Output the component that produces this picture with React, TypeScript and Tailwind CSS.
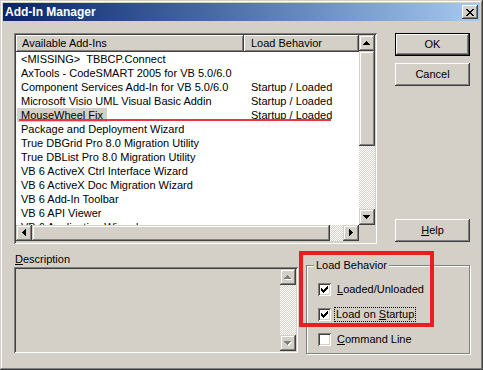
import React from 'react';

// --- classic Win2000 bevels ---
const raised =
  'shadow-[inset_-1px_-1px_0_#404040,inset_1px_1px_0_#ffffff,inset_-2px_-2px_0_#808080,inset_2px_2px_0_#d4d0c8]';
const scrollBtn =
  'shadow-[inset_-1px_-1px_0_#404040,inset_1px_1px_0_#d4d0c8,inset_-2px_-2px_0_#808080,inset_2px_2px_0_#ffffff]';
const sunken =
  'shadow-[inset_1px_1px_0_#808080,inset_-1px_-1px_0_#ffffff,inset_2px_2px_0_#404040,inset_-2px_-2px_0_#d4d0c8]';
const checker = 'bg-[image:repeating-conic-gradient(#ffffff_0%_25%,#d4d0c8_0%_50%)] bg-[length:2px_2px]';

const arrows: Record<string, { w: number; h: number; d: string }> = {
  up: { w: 7, h: 4, d: 'M3 0h1v1h-1z M2 1h3v1h-3z M1 2h5v1h-5z M0 3h7v1h-7z' },
  down: { w: 7, h: 4, d: 'M0 0h7v1h-7z M1 1h5v1h-5z M2 2h3v1h-3z M3 3h1v1h-1z' },
  left: { w: 4, h: 7, d: 'M3 0h1v7h-1z M2 1h1v5h-1z M1 2h1v3h-1z M0 3h1v1h-1z' },
  right: { w: 4, h: 7, d: 'M0 0h1v7h-1z M1 1h1v5h-1z M2 2h1v3h-1z M3 3h1v1h-1z' },
};

const Arrow: React.FC<{ dir: string; disabled?: boolean }> = ({ dir, disabled }) => {
  const a = arrows[dir];
  return (
    <div className={`w-[16px] h-[16px] shrink-0 bg-[#d4d0c8] flex items-center justify-center ${scrollBtn}`}>
      <svg width={a.w + 1} height={a.h + 1} viewBox={`0 0 ${a.w + 1} ${a.h + 1}`} shapeRendering="crispEdges">
        {disabled && <path d={a.d} fill="#ffffff" transform="translate(1 1)" />}
        <path d={a.d} fill={disabled ? '#808080' : '#000000'} />
      </svg>
    </div>
  );
};

const Check: React.FC<{ checked: boolean }> = ({ checked }) => (
  <div className={`w-[13px] h-[13px] shrink-0 bg-white flex items-center justify-center ${sunken}`}>
    {checked && (
      <svg width="7" height="7" viewBox="0 0 7 7" shapeRendering="crispEdges">
        <path
          d="M6 0h1v1h-1z M5 1h2v1h-2z M0 2h1v1h-1z M4 2h3v1h-3z M0 3h2v1h-2z M3 3h3v1h-3z M0 4h5v1h-5z M1 5h3v1h-3z M2 6h1v1h-1z"
          fill="#000"
        />
      </svg>
    )}
  </div>
);

const rows: [string, string][] = [
  ['<MISSING>  TBBCP.Connect', ''],
  ['AxTools - CodeSMART 2005 for VB 5.0/6.0', ''],
  ['Component Services Add-In for VB 5.0/6.0', 'Startup / Loaded'],
  ['Microsoft Visio UML Visual Basic Addin', 'Startup / Loaded'],
  ['MouseWheel Fix', 'Startup / Loaded'],
  ['Package and Deployment Wizard', ''],
  ['True DBGrid Pro 8.0 Migration Utility', ''],
  ['True DBList Pro 8.0 Migration Utility', ''],
  ['VB 6 ActiveX Ctrl Interface Wizard', ''],
  ['VB 6 ActiveX Doc Migration Wizard', ''],
  ['VB 6 Add-In Toolbar', ''],
  ['VB 6 API Viewer', ''],
  ['VB 6 Application Wizard', ''],
];

const Button: React.FC<{ children: React.ReactNode; def?: boolean; className?: string }> = ({ children, def, className }) => (
  <div
    className={`w-[75px] h-[23px] bg-[#d4d0c8] flex items-center justify-center ${def ? 'border border-black' : ''} ${raised} ${className ?? ''}`}
  >
    {children}
  </div>
);

export default function App() {
  return (
    <div className="relative w-[483px] h-[370px] bg-[#d4d0c8] text-black text-[11px] leading-[13px] font-['Liberation_Sans',Arial,sans-serif] shadow-[inset_-1px_-1px_0_#404040,inset_1px_1px_0_#d4d0c8,inset_-2px_-2px_0_#808080,inset_2px_2px_0_#ffffff] p-[3px] flex flex-col overflow-hidden">
      {/* title bar */}
      <div className="h-[18px] shrink-0 bg-linear-to-r from-[#0a246a] to-[#a6caf0] flex items-center justify-between pl-[2px] pr-[2px]">
        <span className="text-white font-bold text-[12px] leading-[14px]">Add-In Manager</span>
        <div className={`w-[16px] h-[14px] bg-[#d4d0c8] flex items-center justify-center ${raised}`}>
          <svg width="8" height="7" viewBox="0 0 8 7" shapeRendering="crispEdges">
            <path
              d="M0 0h2v1h-2z M6 0h2v1h-2z M1 1h2v1h-2z M5 1h2v1h-2z M2 2h4v1h-4z M3 3h2v1h-2z M2 4h4v1h-4z M1 5h2v1h-2z M5 5h2v1h-2z M0 6h2v1h-2z M6 6h2v1h-2z"
              fill="#000"
            />
          </svg>
        </div>
      </div>

      <div className="flex flex-col pl-[11px] pt-[12px]">
        {/* list + buttons */}
        <div className="flex">
          <div className={`w-[363px] h-[211px] p-[2px] ${sunken}`}>
            <div className="flex flex-col w-full h-full">
              <div className="flex h-[190px]">
                <div className="w-[343px] bg-white flex flex-col">
                  <div className="flex h-[17px] shrink-0">
                    <div className={`w-[228px] bg-[#d4d0c8] pl-[6px] flex items-center ${raised}`}>Available Add-Ins</div>
                    <div className={`w-[115px] bg-[#d4d0c8] pl-[7px] flex items-center ${raised}`}>Load Behavior</div>
                  </div>
                  <div className="relative flex-1 overflow-hidden">
                    {rows.map(([name, load], i) => (
                      <div key={i} className="flex h-[14px] leading-[14px] whitespace-pre">
                        <div className="w-[228px] pl-[1px]">
                          <span className={`px-[4px] inline-block ${name === 'MouseWheel Fix' ? 'bg-[#d4d0c8]' : ''}`}>{name}</span>
                        </div>
                        <div className="pl-[7px]">{load}</div>
                      </div>
                    ))}
                    {/* red annotation underline */}
                    <div className="absolute left-[3px] top-[67px] w-[312px] h-[2px] bg-[#ec3440]" />
                  </div>
                </div>
                <div className="w-[16px] flex flex-col">
                  <Arrow dir="up" />
                  <div className={`h-[95px] bg-[#d4d0c8] ${scrollBtn}`} />
                  <div className={`flex-1 ${checker}`} />
                  <Arrow dir="down" />
                </div>
              </div>
              <div className="flex h-[16px]">
                <div className="w-[343px] flex">
                  <Arrow dir="left" />
                  <div className={`w-[298px] bg-[#d4d0c8] ${scrollBtn}`} />
                  <div className={`flex-1 ${checker}`} />
                  <Arrow dir="right" />
                </div>
                <div className="w-[16px] bg-[#d4d0c8]" />
              </div>
            </div>
          </div>

          <div className="ml-[18px] flex flex-col h-[211px] pb-[2px]">
            <Button def>OK</Button>
            <Button className="mt-[7px]">Cancel</Button>
            <Button className="mt-auto">
              <span>
                <span className="underline">H</span>elp
              </span>
            </Button>
          </div>
        </div>

        {/* description + load behavior */}
        <div className="flex items-start">
          <div className="flex flex-col mt-[9px]">
            <div className="pl-px">
              <span className="underline">D</span>escription
            </div>
            <div className={`mt-px w-[284px] h-[86px] p-[2px] ${sunken}`}>
              <div className="flex justify-end h-full">
                <div className="w-[16px] flex flex-col">
                  <Arrow dir="up" disabled />
                  <div className={`flex-1 ${checker}`} />
                  <Arrow dir="down" disabled />
                </div>
              </div>
            </div>
          </div>

          <div className="relative ml-[8px] mt-[21px] w-[164px] h-[89px] border border-[#808080] shadow-[inset_1px_1px_0_#ffffff,1px_1px_0_#ffffff]">
            <span className="absolute left-[7px] top-[-7px] bg-[#d4d0c8] px-[2px]">Load Behavior</span>
            <div className="flex flex-col gap-[8px] pt-[15px] pl-[11px]">
              <div className="flex items-center h-[17px]">
                <Check checked />
                <span className="ml-[4px] px-[2px]">
                  <span className="underline">L</span>oaded/Unloaded
                </span>
              </div>
              <div className="flex items-center h-[17px]">
                <Check checked />
                <span className="ml-[3px] px-px border border-dotted border-black">
                  Load on <span className="underline">S</span>tartup
                </span>
              </div>
              <div className="flex items-center h-[17px]">
                <Check checked={false} />
                <span className="ml-[4px] px-[2px]">
                  <span className="underline">C</span>ommand Line
                </span>
              </div>
            </div>
          </div>
        </div>
      </div>

      {/* red annotation box */}
      <div className="absolute left-[299px] top-[251px] w-[135px] h-[76px] border-[4px] border-[#ed1c24]" />
    </div>
  );
}
